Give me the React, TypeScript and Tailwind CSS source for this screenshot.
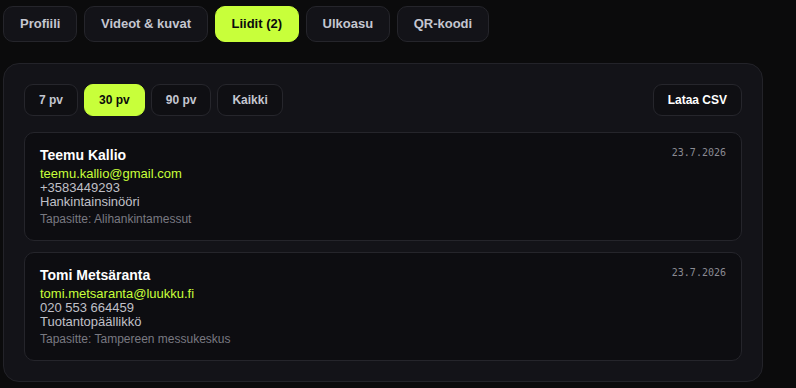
import { useState } from "react";

type Range = "7" | "30" | "90" | "all";

const tabs = ["Profiili", "Videot & kuvat", "Liidit (2)", "Ulkoasu", "QR-koodi"];

const ranges: Array<{ id: Range; label: string }> = [
  { id: "7", label: "7 pv" },
  { id: "30", label: "30 pv" },
  { id: "90", label: "90 pv" },
  { id: "all", label: "Kaikki" },
];

const leads = [
  {
    name: "Teemu Kallio",
    email: "teemu.kallio@gmail.com",
    phone: "+3583449293",
    title: "Hankintainsinööri",
    met: "Alihankintamessut",
    date: "23.7.2026",
  },
  {
    name: "Tomi Metsäranta",
    email: "tomi.metsaranta@luukku.fi",
    phone: "020 553 664459",
    title: "Tuotantopäällikkö",
    met: "Tampereen messukeskus",
    date: "23.7.2026",
  },
];

export default function App() {
  const [activeTab, setActiveTab] = useState("Liidit (2)");
  const [range, setRange] = useState<Range>("30");

  return (
    <div className="min-h-screen bg-[#0b0b0c] px-[3px] pt-[6px] pb-[5px] font-['Liberation_Sans',Arial,sans-serif]">
      <nav className="flex gap-[6.5px]">
        {tabs.map((tab) => {
          const active = tab === activeTab;
          return (
            <button
              key={tab}
              type="button"
              onClick={() => setActiveTab(tab)}
              className={`h-9 rounded-[10px] border px-4 text-[13px] font-bold ${active
                ? "border-[#c8ff3a] bg-[#c8ff3a] text-[#0b0b0c]"
                : "border-[#25252b] bg-[#131318] text-[#c4c6d0]"
                }`}
            >
              {tab}
            </button>
          );
        })}
      </nav>

      <section className="mt-[21px] w-[760px] rounded-2xl border border-[#232329] bg-[#131318] p-5">
        <div className="mb-4 flex items-center justify-between">
          <div className="flex gap-1.5">
            {ranges.map((r) => {
              const active = r.id === range;
              return (
                <button
                  key={r.id}
                  type="button"
                  onClick={() => setRange(r.id)}
                  className={`h-8 rounded-[9px] border px-3.5 text-xs font-bold ${active
                    ? "border-[#c8ff3a] bg-[#c8ff3a] text-[#0b0b0c]"
                    : "border-[#26262c] bg-[#0f0f13] text-[#c4c6d0]"
                    }`}
                >
                  {r.label}
                </button>
              );
            })}
          </div>
          <button
            type="button"
            className="h-8 rounded-[9px] border border-[#26262c] bg-[#0f0f13] px-3.5 text-xs font-bold text-white"
          >
            Lataa CSV
          </button>
        </div>

        <div className="flex flex-col gap-[11px]">
          {leads.map((lead) => (
            <article
              key={lead.email}
              className="flex items-start justify-between rounded-[10px] border border-[#25252b] bg-[#0d0d11] px-[15px] pt-3 pb-[13px]"
            >
              <div>
                <p className="text-sm leading-5 font-bold text-white">{lead.name}</p>
                <p className="mt-0.5 text-[13px] leading-[14px] text-[#c8ff3a]">{lead.email}</p>
                <p className="text-[13px] leading-[14px] text-[#c0c0c8]">{lead.phone}</p>
                <p className="text-[13px] leading-[14px] text-[#c0c0c8]">{lead.title}</p>
                <p className="mt-[2px] text-xs leading-4 text-[#797981]">Tapasitte: {lead.met}</p>
              </div>
              <span className="font-['DejaVu_Sans_Mono',monospace] text-[10px] leading-4 text-[#8a8a92]">
                {lead.date}
              </span>
            </article>
          ))}
        </div>
      </section>
    </div>
  );
}
